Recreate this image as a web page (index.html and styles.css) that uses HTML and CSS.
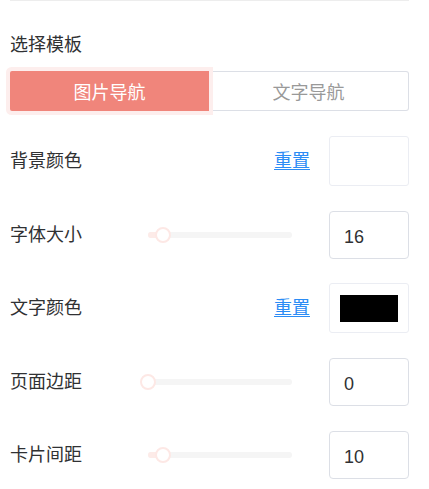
FILE: index.html
```html
<!DOCTYPE html>
<html lang="zh">
<head>
<meta charset="utf-8">
<link rel="stylesheet" href="styles.css">
</head>
<body>
<div class="panel">
  <div class="divider"></div>
  <div class="section-title">选择模板</div>
  <div class="segmented">
    <div class="seg seg-active">图片导航</div>
    <div class="seg seg-idle">文字导航</div>
  </div>
  <div class="rows">
    <div class="row">
      <span class="label">背景颜色</span>
      <span class="spacer"></span>
      <a class="reset">重置</a>
      <div class="swatch-box"></div>
    </div>
    <div class="row">
      <span class="label">字体大小</span>
      <div class="slider">
        <div class="track"><div class="fill" style="width:15px"></div></div>
        <div class="handle" style="left:15px"></div>
      </div>
      <span class="spacer"></span>
      <div class="num-input">16</div>
    </div>
    <div class="row">
      <span class="label">文字颜色</span>
      <span class="spacer"></span>
      <a class="reset">重置</a>
      <div class="swatch-box"><div class="swatch"></div></div>
    </div>
    <div class="row">
      <span class="label">页面边距</span>
      <div class="slider">
        <div class="track"><div class="fill" style="width:0px"></div></div>
        <div class="handle" style="left:0px"></div>
      </div>
      <span class="spacer"></span>
      <div class="num-input">0</div>
    </div>
    <div class="row">
      <span class="label">卡片间距</span>
      <div class="slider">
        <div class="track"><div class="fill" style="width:15px"></div></div>
        <div class="handle" style="left:15px"></div>
      </div>
      <span class="spacer"></span>
      <div class="num-input">10</div>
    </div>
  </div>
</div>
</body>
</html>
```

FILE: styles.css
```css
* { box-sizing: border-box; }
html, body {
  margin: 0;
  padding: 0;
  background: #fff;
}
body {
  font-family: "Liberation Sans", "Noto Sans CJK SC", sans-serif;
  font-size: 18px;
  color: #303133;
}
.panel {
  width: 429px;
  padding: 0 20px 0 10px;
}
.divider {
  height: 1px;
  background: #ededed;
}
.section-title {
  margin-top: 32px;
  line-height: 24px;
  height: 24px;
}
.segmented {
  margin-top: 14px;
  display: flex;
  height: 40px;
}
.seg {
  flex: 1;
  display: flex;
  align-items: center;
  justify-content: center;
  font-size: 18px;
}
.seg-active {
  background: #f0857b;
  color: #fff;
  border-radius: 2px 0 0 2px;
  box-shadow: 0 0 0 4px #fdeeed;
  position: relative;
  z-index: 1;
}
.seg-idle {
  color: #999;
  border: 1px solid #dcdfe6;
  border-left: none;
  border-radius: 0 3px 3px 0;
}
.rows {
  margin-top: 25px;
  display: flex;
  flex-direction: column;
  gap: 23.5px;
}
.row {
  display: flex;
  align-items: center;
  height: 50px;
}
.label {
  width: 138px;
  flex: none;
  line-height: 24px;
}
.spacer { flex: 1; }
.reset {
  color: #2b8cf5;
  text-decoration: underline;
  text-underline-offset: 2px;
  margin-right: 19px;
  line-height: 24px;
}
.swatch-box {
  width: 80px;
  height: 50px;
  border: 1px solid #ebedf3;
  border-radius: 3px;
  padding: 11px 10px 10px 10px;
}
.swatch {
  width: 58px;
  height: 27px;
  background: #000;
}
.slider {
  position: relative;
  width: 144px;
  height: 16px;
  flex: none;
}
.track {
  position: absolute;
  left: 0;
  right: 0;
  top: 5px;
  height: 6px;
  border-radius: 3px;
  background: #f5f5f5;
  overflow: hidden;
}
.fill {
  height: 100%;
  background: #fdebe8;
}
.handle {
  position: absolute;
  top: 0;
  width: 16px;
  height: 16px;
  margin-left: -8px;
  border-radius: 50%;
  background: #fff;
  border: 2px solid #fde8e5;
}
.num-input {
  width: 80px;
  height: 48px;
  border: 1px solid #dcdfe6;
  border-radius: 4px;
  padding-left: 14px;
  padding-top: 5px;
  display: flex;
  align-items: center;
  font-size: 18px;
  color: #303133;
}
```
